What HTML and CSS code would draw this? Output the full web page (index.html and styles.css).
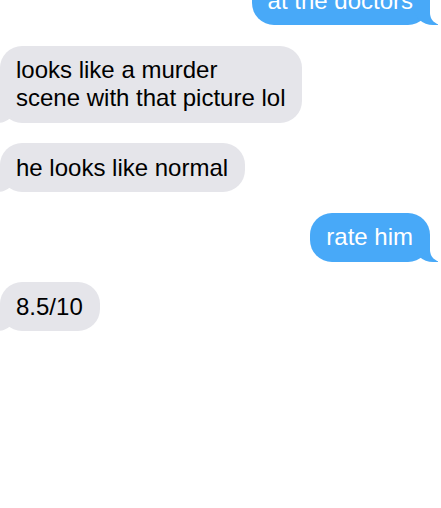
FILE: index.html
```
<!DOCTYPE html>
<html>
<head>
<meta charset="utf-8">
<link rel="stylesheet" href="styles.css">
</head>
<body>
<div class="chat">
  <p class="msg from-me">at the doctors</p>
  <p class="msg from-them">looks like a murder<br>scene with that picture lol</p>
  <p class="msg from-them">he looks like normal</p>
  <p class="msg from-me">rate him</p>
  <p class="msg from-them">8.5/10</p>
</div>
</body>
</html>
```
FILE: styles.css
```
html, body {
  margin: 0;
  padding: 0;
  background: #fff;
  overflow: hidden;
}
.chat {
  display: flex;
  flex-direction: column;
  gap: 20.5px;
  margin-top: -24px;
  padding: 0 11px 0 0;
  font-family: "Liberation Sans", Arial, sans-serif;
  font-size: 24px;
}
.msg {
  position: relative;
  margin: 0;
  padding: 10.5px 17px 10.5px 16px;
  border-radius: 22px;
  line-height: normal;
  max-width: 75%;
}
.msg::before,
.msg::after {
  content: "";
  position: absolute;
  bottom: -2px;
  height: 24px;
}
.from-me {
  align-self: flex-end;
  background: #48a9f8;
  color: #fff;
}
.from-me::before {
  right: -8px;
  border-right: 24px solid #48a9f8;
  border-bottom-left-radius: 19px 17px;
  transform: translate(0, -2px);
}
.from-me::after {
  right: -15px;
  width: 15px;
  background: #fff;
  border-bottom-left-radius: 12px;
  transform: translate(0, -2px);
}
.from-them {
  align-self: flex-start;
  background: #e5e5ea;
  color: #000;
}
.from-them::before {
  left: -8px;
  border-left: 24px solid #e5e5ea;
  border-bottom-right-radius: 19px 17px;
  transform: translate(0, -2px);
}
.from-them::after {
  left: -15px;
  width: 15px;
  background: #fff;
  border-bottom-right-radius: 12px;
  transform: translate(0, -2px);
}
```
